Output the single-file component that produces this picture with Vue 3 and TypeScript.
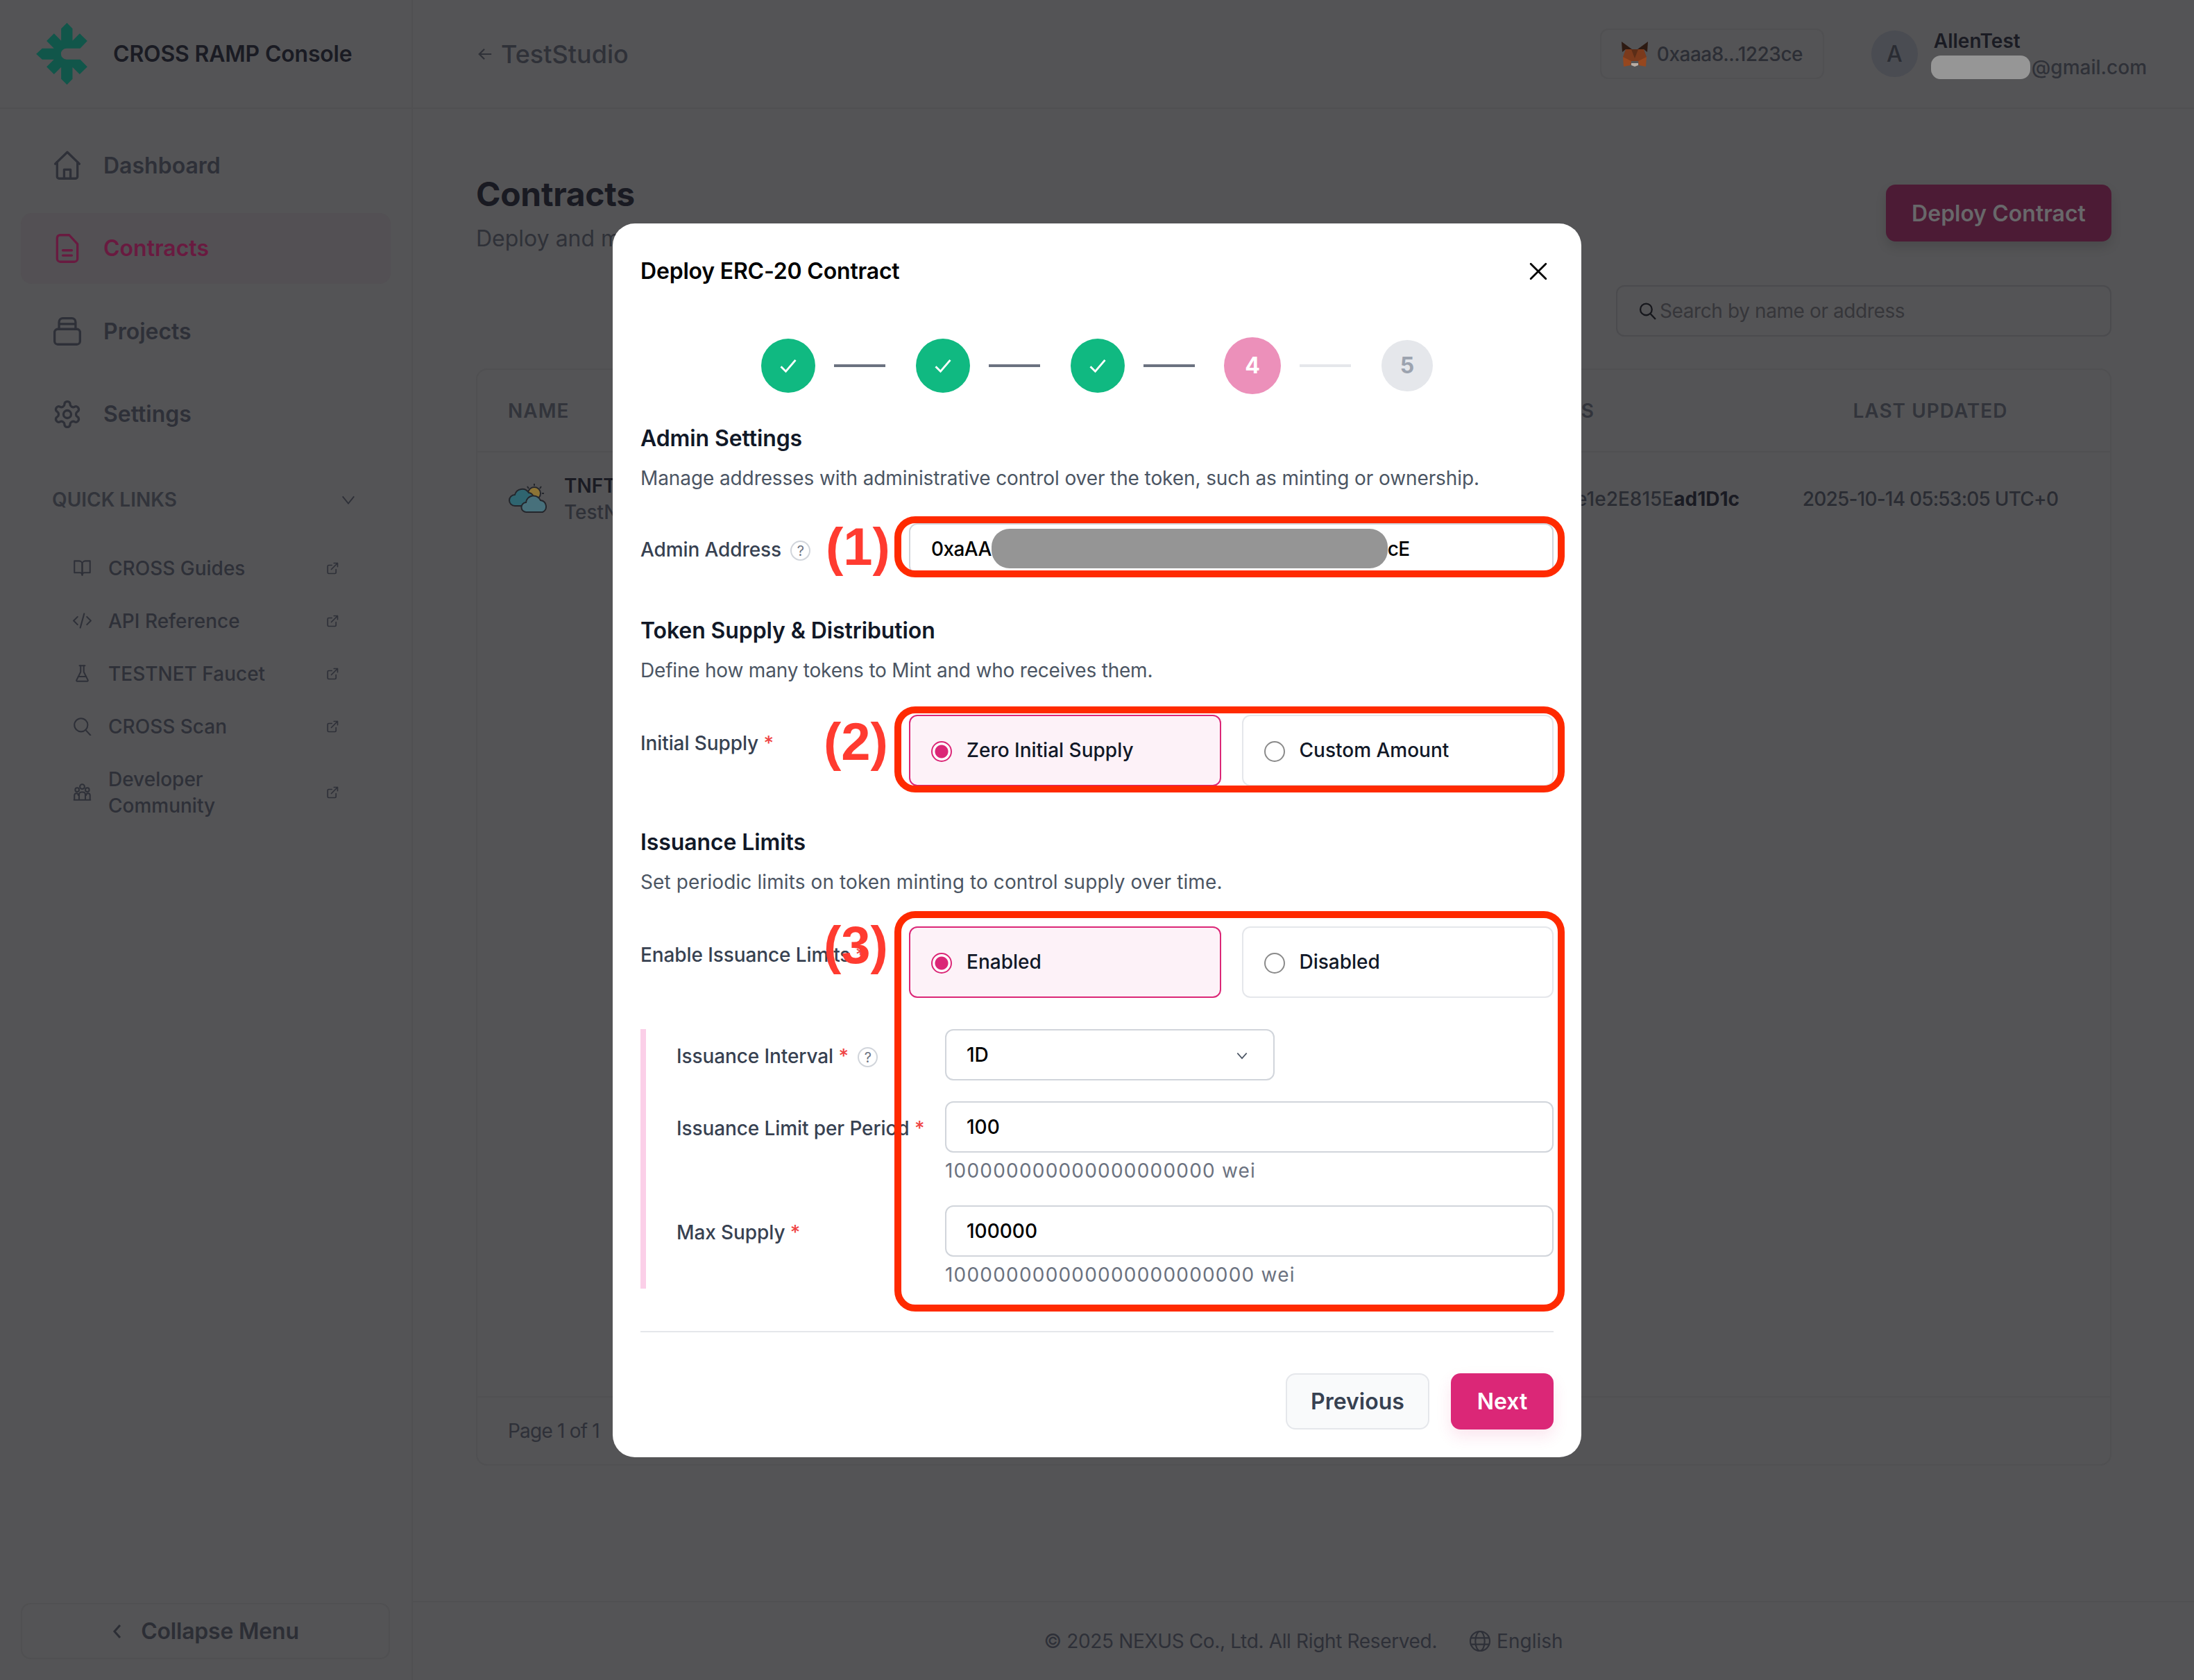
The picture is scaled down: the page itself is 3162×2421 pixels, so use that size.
<script setup lang="ts">
// deploy wizard, step 4 of 5, shown over the contracts page
const navItems = [
  { label: 'Dashboard', icon: 'home' },
  { label: 'Contracts', icon: 'doc', active: true },
  { label: 'Projects', icon: 'stack' },
  { label: 'Settings', icon: 'gear' },
]

const quickLinks = [
  { label: 'CROSS Guides', icon: 'book' },
  { label: 'API Reference', icon: 'code' },
  { label: 'TESTNET Faucet', icon: 'flask' },
  { label: 'CROSS Scan', icon: 'search' },
  { label: 'Developer Community', icon: 'people' },
]

const steps = [
  { n: 1, state: 'done' },
  { n: 2, state: 'done' },
  { n: 3, state: 'done' },
  { n: 4, state: 'current' },
  { n: 5, state: 'todo' },
]

const annotations = [
  { cls: 'box-1', num: '(1)', numCls: 'num-1' },
  { cls: 'box-2', num: '(2)', numCls: 'num-2' },
  { cls: 'box-3', num: '(3)', numCls: 'num-3' },
]
</script>

<template>
  <div class="page">
    <aside class="sidebar">
      <div class="brand">
        <svg class="logo" viewBox="157 100 221 267">
          <path d="M290 100 314 125V177L345 146 378 178 347 210H288A24 24 0 0 0 288 258H347L378 290 345 322 314 291V342L290 367 265 342V291L234 322 202 290 234 258H183L157 234 183 210H234L202 178 234 146 265 177V125Z" />
        </svg>
        <span class="brand-name">CROSS RAMP Console</span>
      </div>

      <nav class="nav">
        <a v-for="item in navItems" :key="item.label" class="nav-item" :class="{ active: item.active }">
          <svg class="nav-icon" viewBox="0 0 24 24">
            <template v-if="item.icon === 'home'">
              <path d="M2.5 11 12 1.8 21.5 11" />
              <path d="M4 9.5V21a1.5 1.5 0 0 0 1.5 1.5h13A1.5 1.5 0 0 0 20 21V9.5" />
              <path d="M9.5 22.5V15.5h5V22.5" />
            </template>
            <template v-else-if="item.icon === 'doc'">
              <path d="M6 1.5h7.5L20 8.5V20a2.5 2.5 0 0 1-2.5 2.5h-11A2.5 2.5 0 0 1 4 20V4a2.5 2.5 0 0 1 2-2.5Z" />
              <path d="M8.5 13.5h7M8.5 17.5h7" />
            </template>
            <template v-else-if="item.icon === 'stack'">
              <rect x="2" y="10.5" width="20" height="12" rx="2.5" />
              <path d="M5.5 10.5V5a3 3 0 0 1 3-3h7a3 3 0 0 1 3 3v5.5M5.5 6.5h13" />
            </template>
            <template v-else>
              <path d="M12.22 2h-.44a2 2 0 0 0-2 2v.18a2 2 0 0 1-1 1.73l-.43.25a2 2 0 0 1-2 0l-.15-.08a2 2 0 0 0-2.73.73l-.22.38a2 2 0 0 0 .73 2.73l.15.1a2 2 0 0 1 1 1.72v.51a2 2 0 0 1-1 1.74l-.15.09a2 2 0 0 0-.73 2.73l.22.38a2 2 0 0 0 2.73.73l.15-.08a2 2 0 0 1 2 0l.43.25a2 2 0 0 1 1 1.73V20a2 2 0 0 0 2 2h.44a2 2 0 0 0 2-2v-.18a2 2 0 0 1 1-1.73l.43-.25a2 2 0 0 1 2 0l.15.08a2 2 0 0 0 2.73-.73l.22-.39a2 2 0 0 0-.73-2.73l-.15-.08a2 2 0 0 1-1-1.74v-.5a2 2 0 0 1 1-1.74l.15-.09a2 2 0 0 0 .73-2.73l-.22-.38a2 2 0 0 0-2.73-.73l-.15.08a2 2 0 0 1-2 0l-.43-.25a2 2 0 0 1-1-1.73V4a2 2 0 0 0-2-2z" />
              <circle cx="12" cy="12" r="3" />
            </template>
          </svg>
          {{ item.label }}
        </a>
      </nav>

      <div class="quick-head">
        <span>QUICK LINKS</span>
        <svg class="quick-chevron" viewBox="0 0 24 24"><path d="M3 7l9 11 9-11" /></svg>
      </div>

      <ul class="quick-list">
        <li v-for="link in quickLinks" :key="link.label" class="quick-item">
          <svg class="quick-icon" viewBox="0 0 24 24">
            <template v-if="link.icon === 'book'">
              <path d="M2 3h6a4 4 0 0 1 4 4v14a3 3 0 0 0-3-3H2z" />
              <path d="M22 3h-6a4 4 0 0 0-4 4v14a3 3 0 0 1 3-3h7z" />
            </template>
            <template v-else-if="link.icon === 'code'">
              <path d="M6 7 1 12l5 5M18 7l5 5-5 5M14.5 3l-5 18" />
            </template>
            <template v-else-if="link.icon === 'flask'">
              <path d="M10 2v7.53a2 2 0 0 1-.21.9L4.72 20.55a1 1 0 0 0 .9 1.45h12.76a1 1 0 0 0 .9-1.45l-5.07-10.12a2 2 0 0 1-.21-.9V2" />
              <path d="M8.5 2h7M7 16h10" />
            </template>
            <template v-else-if="link.icon === 'search'">
              <circle cx="10.5" cy="10.5" r="8.5" />
              <path d="m16.5 17 6 6.5" />
            </template>
            <template v-else>
              <circle cx="12" cy="5" r="3" />
              <circle cx="5.5" cy="9" r="2.5" />
              <circle cx="18.5" cy="9" r="2.5" />
              <path d="M8 22v-7a3 3 0 0 1 3-3h2a3 3 0 0 1 3 3v7M2 22v-6a2.5 2.5 0 0 1 5 0M17 16a2.5 2.5 0 0 1 5 0v6M1.5 22h21" />
            </template>
          </svg>
          <span class="quick-label">{{ link.label }}</span>
          <svg class="ext-icon" viewBox="0 0 24 24">
            <path d="M19 14v6a2 2 0 0 1-2 2H5a2 2 0 0 1-2-2V8a2 2 0 0 1 2-2h6M15 2h7v7M10 14 22 2" />
          </svg>
        </li>
      </ul>

      <button class="collapse">
        <svg class="collapse-icon" viewBox="0 0 12 24"><path d="M10 3 2 12l8 9" /></svg>
        Collapse Menu
      </button>
    </aside>

    <div class="main">
      <header class="topbar">
        <div class="crumb">
          <svg class="crumb-arrow" viewBox="0 0 24 24"><path d="M22 12H3M11 4l-8 8 8 8" /></svg>
          TestStudio
        </div>
        <div class="wallet">
          <svg class="fox" viewBox="0 0 38 36">
            <path fill="#2d1a12" d="M0 0 15 11H6L1 15Z" />
            <path fill="#2d1a12" d="M38 0 23 11H32L37 15Z" />
            <path fill="#7b3a1c" d="M6 11H32L36 22 33 30 24 28H14L5 30 2 22Z" />
            <path fill="#96471f" d="M2 22 14 28 13 34 3 36Z" />
            <path fill="#96471f" d="M36 22 24 28 25 34 35 36Z" />
            <path fill="#5b2d17" d="M14 11 19 24 24 11Z" />
            <path fill="#b9ada4" d="M14 31H24V34L19 36 14 34Z" />
          </svg>
          0xaaa8...1223ce
        </div>
        <div class="account">
          <div class="avatar">A</div>
          <div class="account-text">
            <div class="account-name">AllenTest</div>
            <div class="account-mail"><span class="mail-mask"></span>@gmail.com</div>
          </div>
        </div>
      </header>

      <section class="content">
        <div class="title-row">
          <div>
            <h1 class="page-title">Contracts</h1>
            <p class="page-sub">Deploy and manage your contracts</p>
          </div>
          <button class="deploy-btn">Deploy Contract</button>
        </div>

        <div class="filters">
          <div class="search">
            <svg class="search-icon" viewBox="0 0 24 24"><circle cx="10" cy="10" r="8" /><path d="m16 16 7 7.5" /></svg>
            Search by name or address
          </div>
        </div>

        <div class="table-card">
          <div class="table-row table-head">
            <span>NAME</span>
            <span class="addr-head">ADDRESS</span>
            <span class="date-cell">LAST UPDATED</span>
          </div>
          <div class="table-row table-body">
            <div class="name-cell">
              <svg class="cloud" viewBox="0 0 58 44">
                <circle cx="38" cy="14" r="9" fill="#8c7436" stroke="#24262c" stroke-width="2" />
                <path d="M38 0v3M28 4l2 3M48 4l-2 3M52 14h-3" stroke="#24262c" stroke-width="2" fill="none" />
                <path d="M10 32a8 8 0 0 1 0-16 11 11 0 0 1 20-3 8 8 0 0 1 6 12v7Z" fill="#2f6570" stroke="#24262c" stroke-width="2" />
                <path d="M27 41a7 7 0 0 1-1-14 11 11 0 0 1 21-3 9 9 0 0 1 3 17Z" fill="#47707b" stroke="#24262c" stroke-width="2" />
              </svg>
              <div>
                <div class="name-main">TNFT</div>
                <div class="name-sub">TestNFT</div>
              </div>
            </div>
            <span class="addr-cell">e1e2E815E<b>ad1D1c</b></span>
            <span class="date-cell">2025-10-14 05:53:05 UTC+0</span>
          </div>
          <div class="table-foot">Page 1 of 1</div>
        </div>
      </section>

      <footer class="footer">
        <span class="copyright">© 2025 NEXUS Co., Ltd. All Right Reserved.</span>
        <span class="lang">
          <svg class="globe" viewBox="0 0 24 24">
            <circle cx="12" cy="12" r="10.5" />
            <ellipse cx="12" cy="12" rx="5" ry="10.5" />
            <path d="M2 8.5h20M2 15.5h20" />
          </svg>
          English
        </span>
      </footer>
    </div>

    <div class="scrim">
      <div class="modal">
        <div class="modal-head">
          <h2 class="modal-title">Deploy ERC-20 Contract</h2>
          <svg class="close" viewBox="0 0 24 24"><path d="M2 2l20 20M22 2 2 22" /></svg>
        </div>

        <div class="stepper">
          <template v-for="(step, i) in steps" :key="step.n">
            <span v-if="i > 0" class="step-line" :class="{ light: step.state === 'todo' }"></span>
            <span class="step" :class="step.state">
              <svg v-if="step.state === 'done'" class="check" viewBox="0 0 24 24"><path d="M3 13l6 6L21 5" /></svg>
              <template v-else>{{ step.n }}</template>
            </span>
          </template>
        </div>

        <h3 class="section-title first">Admin Settings</h3>
        <p class="section-desc">Manage addresses with administrative control over the token, such as minting or ownership.</p>
        <div class="form-row admin-row">
          <label class="form-label">Admin Address <span class="help">?</span></label>
          <div class="field address">
            0xaAA<span class="mask"></span>cE
          </div>
        </div>

        <h3 class="section-title">Token Supply &amp; Distribution</h3>
        <p class="section-desc tight">Define how many tokens to Mint and who receives them.</p>
        <div class="form-row radio-row">
          <label class="form-label">Initial Supply <span class="req">*</span></label>
          <div class="radio-grid">
            <div class="radio-card on"><span class="radio"></span>Zero Initial Supply</div>
            <div class="radio-card"><span class="radio"></span>Custom Amount</div>
          </div>
        </div>

        <h3 class="section-title">Issuance Limits</h3>
        <p class="section-desc wide">Set periodic limits on token minting to control supply over time.</p>
        <div class="form-row radio-row">
          <label class="form-label">Enable Issuance Limits <span class="req">*</span></label>
          <div class="radio-grid">
            <div class="radio-card on"><span class="radio"></span>Enabled</div>
            <div class="radio-card"><span class="radio"></span>Disabled</div>
          </div>
        </div>

        <div class="nested">
          <div class="nested-row">
            <label class="form-label">Issuance Interval <span class="req">*</span> <span class="help">?</span></label>
            <div class="field select">
              1D
              <svg class="select-chevron" viewBox="0 0 24 24"><path d="M4 8l8 9 8-9" /></svg>
            </div>
          </div>
          <div class="nested-row">
            <label class="form-label">Issuance Limit per Period <span class="req">*</span></label>
            <div>
              <input class="field" value="100" readonly />
              <div class="hint">100000000000000000000 wei</div>
            </div>
          </div>
          <div class="nested-row">
            <label class="form-label">Max Supply <span class="req">*</span></label>
            <div>
              <input class="field" value="100000" readonly />
              <div class="hint">100000000000000000000000 wei</div>
            </div>
          </div>
        </div>

        <div class="modal-actions">
          <button class="btn-prev">Previous</button>
          <button class="btn-next">Next</button>
        </div>

        <!-- review marks drawn on top of the screenshot -->
        <template v-for="mark in annotations" :key="mark.num">
          <div class="mark-box" :class="mark.cls"></div>
          <div class="mark-num" :class="mark.numCls">{{ mark.num }}</div>
        </template>
      </div>
    </div>
  </div>
</template>

<style>
html,
body {
  margin: 0;
  background: #545456;
}
</style>

<style scoped>
* {
  box-sizing: border-box;
}
.page {
  position: relative;
  display: grid;
  grid-template-columns: 595px 1fr;
  width: 3162px;
  height: 2421px;
  overflow: hidden;
  background: #545456;
  color: #1e1f27;
  font-family: Inter, "Noto Sans", sans-serif;
}

/* sidebar */
.sidebar {
  display: flex;
  flex-direction: column;
  border-right: 2px solid #505052;
}
.brand {
  display: flex;
  align-items: center;
  gap: 37px;
  height: 157px;
  padding-left: 52px;
  border-bottom: 2px solid #505052;
}
.logo {
  width: 74px;
  height: 89px;
  fill: #11564a;
}
.brand-name {
  font-size: 32px;
  font-weight: 600;
  letter-spacing: -0.2px;
  color: #1a1b23;
}
.nav {
  display: flex;
  flex-direction: column;
  gap: 17.5px;
  margin-top: 30px;
  padding: 0 30px;
}
.nav-item {
  display: flex;
  align-items: center;
  gap: 30px;
  height: 102px;
  padding-left: 45px;
  border-radius: 16px;
  font-size: 32px;
  font-weight: 600;
  color: #2e3038;
}
.nav-item.active {
  background: #535054;
  color: #691a40;
}
.nav-icon {
  width: 44px;
  height: 44px;
  fill: none;
  stroke: currentColor;
  stroke-width: 1.8;
  stroke-linecap: round;
  stroke-linejoin: round;
}
.quick-head {
  display: flex;
  align-items: center;
  justify-content: space-between;
  height: 88px;
  margin: 28px 37px 0 47px;
  padding: 0 43px 0 28px;
  font-size: 28px;
  font-weight: 600;
  color: #32343b;
}
.quick-chevron {
  width: 22px;
  height: 22px;
  fill: none;
  stroke: #2e3038;
  stroke-width: 2;
}
.quick-list {
  margin: 17px 0 0;
  padding: 0 0 0 105px;
  list-style: none;
}
.quick-item {
  display: flex;
  align-items: center;
  padding: 19px 0;
  font-size: 28px;
  font-weight: 500;
  line-height: 38px;
  color: #2e3038;
}
.quick-icon {
  flex: none;
  width: 27px;
  height: 27px;
  margin-right: 24px;
  fill: none;
  stroke: currentColor;
  stroke-width: 1.8;
  stroke-linejoin: round;
  stroke-linecap: round;
}
.quick-label {
  width: 314px;
  padding-right: 50px;
}
.ext-icon {
  flex: none;
  width: 18px;
  height: 18px;
  fill: none;
  stroke: currentColor;
  stroke-width: 2.2;
  stroke-linecap: round;
  stroke-linejoin: round;
}
.collapse {
  display: flex;
  align-items: center;
  justify-content: center;
  gap: 28px;
  height: 81px;
  margin: auto 31px 30px 30px;
  padding-left: 8px;
  border: 2px solid #505052;
  border-radius: 14px;
  background: #545456;
  font: 600 32px Inter, "Noto Sans", sans-serif;
  letter-spacing: -0.2px;
  color: #2c2e35;
}
.collapse-icon {
  width: 12px;
  height: 26px;
  fill: none;
  stroke: currentColor;
  stroke-width: 3;
}

/* main column */
.main {
  display: flex;
  flex-direction: column;
  min-width: 0;
}
.topbar {
  display: flex;
  align-items: center;
  height: 157px;
  padding: 0 68px 0 93px;
  border-bottom: 2px solid #505052;
}
.crumb {
  display: flex;
  align-items: center;
  gap: 12px;
  margin-right: auto;
  font-size: 36px;
  font-weight: 500;
  color: #2f3138;
}
.crumb-arrow {
  width: 22px;
  height: 22px;
  fill: none;
  stroke: currentColor;
  stroke-width: 2.4;
}
.wallet {
  display: flex;
  align-items: center;
  gap: 13px;
  height: 73px;
  width: 323px;
  padding-left: 29px;
  border: 2px solid #505052;
  border-radius: 12px;
  font-size: 28px;
  font-weight: 500;
  letter-spacing: -0.5px;
  color: #2c2e35;
}
.fox {
  width: 38px;
  height: 36px;
}
.account {
  display: flex;
  align-items: center;
  gap: 19px;
  margin-left: 68px;
}
.avatar {
  display: flex;
  align-items: center;
  justify-content: center;
  width: 67px;
  height: 67px;
  border-radius: 50%;
  background: #4a4c52;
  font-size: 32px;
  font-weight: 500;
  color: #2a2c33;
}
.account-name {
  margin-left: 4px;
  font-size: 28px;
  font-weight: 600;
  line-height: 38px;
  color: #1a1b23;
}
.account-mail {
  display: flex;
  align-items: center;
  height: 38px;
  font-size: 28px;
  font-weight: 500;
  color: #2f3138;
}
.mail-mask {
  width: 143px;
  height: 34px;
  margin-right: 2px;
  border-radius: 14px;
  background: #969696;
}
.content {
  display: flex;
  flex: 1;
  flex-direction: column;
  padding: 0 119px 0 91px;
}
.title-row {
  display: flex;
  align-items: flex-start;
  justify-content: space-between;
  padding-top: 93px;
}
.page-title {
  margin: 0;
  font-size: 48px;
  font-weight: 700;
  line-height: 60px;
  letter-spacing: -0.3px;
  color: #191a22;
}
.page-sub {
  margin: 12px 0 0;
  font-size: 32px;
  line-height: 44px;
  color: #2f3138;
}
.deploy-btn {
  width: 325px;
  height: 82px;
  margin-top: 16px;
  border: 0;
  border-radius: 14px;
  background: #4c1b35;
  box-shadow: 0 8px 16px rgba(0, 0, 0, 0.12);
  font: 600 32px Inter, "Noto Sans", sans-serif;
  color: #68686a;
}
.filters {
  display: flex;
  justify-content: flex-end;
  margin-top: 45px;
}
.search {
  display: flex;
  align-items: center;
  gap: 5px;
  width: 714px;
  height: 74px;
  padding-left: 31px;
  border: 2px solid #4b4b4e;
  border-radius: 12px;
  font-size: 28px;
  letter-spacing: -0.4px;
  color: #36363a;
}
.search-icon {
  width: 25px;
  height: 26px;
  fill: none;
  stroke: #16171c;
  stroke-width: 2.2;
}
.table-card {
  display: flex;
  flex-direction: column;
  height: 1581px;
  margin-top: 46px;
  border: 2px solid #505052;
  border-radius: 16px;
}
.table-row {
  display: grid;
  grid-template-columns: 1fr auto 370px;
  column-gap: 90px;
  align-items: center;
  padding: 0 74px 0 44px;
  font-size: 28px;
}
.table-head {
  height: 119px;
  border-bottom: 2px solid #505052;
  font-weight: 600;
  letter-spacing: 1px;
  color: #32343b;
}
.addr-head {
  margin-right: 209px;
}
.table-body {
  flex: 1;
  align-items: start;
  padding-top: 29px;
  font-weight: 500;
  line-height: 34px;
  color: #2a2c33;
}
.name-cell {
  display: flex;
  align-items: center;
  gap: 23px;
}
.cloud {
  width: 58px;
  height: 44px;
}
.name-main {
  font-weight: 600;
  line-height: 38px;
  color: #1a1b23;
}
.name-sub {
  line-height: 38px;
  color: #2f3138;
}
.addr-cell {
  margin-top: 21px;
  text-align: right;
}
.addr-cell b {
  font-weight: 700;
  color: #1a1b23;
}
.date-cell {
  justify-self: center;
  white-space: nowrap;
}
.table-body .date-cell {
  margin-top: 21px;
  letter-spacing: -0.8px;
}
.table-foot {
  display: flex;
  align-items: center;
  height: 98px;
  padding-left: 44px;
  border-top: 2px solid #505052;
  font-size: 28px;
  letter-spacing: -0.8px;
  color: #2e3038;
}
.footer {
  display: flex;
  align-items: center;
  justify-content: center;
  gap: 46px;
  height: 114px;
  border-top: 2px solid #505052;
  font-size: 28px;
  color: #2e3038;
}
.copyright {
  letter-spacing: -0.35px;
}
.lang {
  display: flex;
  align-items: center;
  gap: 8px;
}
.globe {
  width: 32px;
  height: 32px;
  fill: none;
  stroke: currentColor;
  stroke-width: 1.6;
}

/* overlay */
.scrim {
  position: absolute;
  inset: 0;
  display: flex;
  align-items: center;
  justify-content: center;
}
.modal {
  position: relative;
  width: 1396px;
  height: 1778px;
  padding: 49px 40px 40px;
  border-radius: 32px;
  background: #fff;
  color: #111827;
}
.modal-head {
  display: flex;
  align-items: center;
  justify-content: space-between;
  height: 40px;
}
.modal-title {
  margin: 0;
  font-size: 32px;
  font-weight: 600;
  line-height: 40px;
  letter-spacing: -0.2px;
  color: #000;
}
.close {
  width: 26px;
  height: 26px;
  margin-right: 9px;
  fill: none;
  stroke: #000;
  stroke-width: 2.6;
  stroke-linecap: round;
}
.stepper {
  display: flex;
  align-items: center;
  justify-content: center;
  height: 82px;
  margin-top: 75px;
}
.step {
  display: flex;
  flex: none;
  align-items: center;
  justify-content: center;
  border-radius: 50%;
  font-size: 32px;
  font-weight: 700;
}
.step.done {
  width: 78px;
  height: 78px;
  background: #10b981;
}
.step.current {
  width: 82px;
  height: 82px;
  margin-left: -2px;
  background: #ec90ba;
  color: #fff;
}
.step.todo {
  width: 74px;
  height: 74px;
  background: #e5e7eb;
  color: #9ca3af;
}
.check {
  width: 28px;
  height: 28px;
  fill: none;
  stroke: #fff;
  stroke-width: 2.5;
}
.step-line {
  flex: none;
  width: 74px;
  height: 4px;
  margin: 0 44px 0 27px;
  background: #6b7280;
}
.step-line.light {
  background: #e5e7eb;
}
.section-title {
  margin: 61px 0 0;
  font-size: 32px;
  font-weight: 600;
  line-height: 40px;
  letter-spacing: -0.1px;
  color: #111827;
}
.section-title.first {
  margin-top: 44px;
}
.section-desc {
  margin: 18px 0 0;
  font-size: 28px;
  line-height: 38px;
  letter-spacing: -0.1px;
  color: #4b5563;
}
.section-desc.tight {
  letter-spacing: -0.2px;
}
.section-desc.wide {
  letter-spacing: 0.1px;
}
.form-row {
  display: grid;
  grid-template-columns: 387px 1fr;
  margin-top: 45px;
}
.admin-row {
  margin-top: 46px;
}
.admin-row .form-label {
  padding-top: 19px;
}
.radio-row .form-label {
  padding-top: 22px;
}
.form-label {
  display: block;
  padding-top: 20px;
  font-size: 28px;
  font-weight: 500;
  line-height: 38px;
  letter-spacing: -0.1px;
  color: #374151;
  white-space: nowrap;
}
.req {
  color: #ef4444;
}
.help {
  display: inline-flex;
  align-items: center;
  justify-content: center;
  width: 29px;
  height: 29px;
  margin-left: 6px;
  border: 2px solid #d1d5db;
  border-radius: 50%;
  font-size: 20px;
  font-weight: 400;
  color: #6b7280;
  vertical-align: 1px;
}
.field {
  display: flex;
  align-items: center;
  width: 100%;
  height: 74px;
  padding: 0 29px;
  border: 2px solid #d1d5db;
  border-radius: 12px;
  background: #fff;
  font: 500 28px Inter, "Noto Sans", sans-serif;
  color: #000;
  outline: none;
}
.address {
  padding-left: 30px;
  letter-spacing: -0.6px;
}
.mask {
  flex: none;
  width: 571px;
  height: 57px;
  border-radius: 26px;
  background: #959595;
}
.select {
  position: relative;
  width: 475px;
}
.select-chevron {
  position: absolute;
  top: 26px;
  right: 35px;
  width: 20px;
  height: 20px;
  fill: none;
  stroke: #4b5563;
  stroke-width: 2;
}
.radio-grid {
  display: grid;
  grid-template-columns: 1fr 1fr;
  gap: 30px;
}
.radio-card {
  display: flex;
  align-items: center;
  gap: 21px;
  height: 103px;
  padding-left: 30px;
  border: 2px solid #e5e7eb;
  border-radius: 12px;
  font-size: 28px;
  font-weight: 500;
  color: #111827;
}
.radio-card.on {
  border-color: #db2777;
  background: #fdf2f8;
}
.radio {
  flex: none;
  width: 30px;
  height: 30px;
  margin-top: 4px;
  border: 2px solid #8a8a8a;
  border-radius: 50%;
  background: #fff;
}
.radio-card.on .radio {
  border-color: #db2777;
  background: radial-gradient(circle, #db2777 0 9px, #fff 10px);
}
.nested {
  display: flex;
  flex-direction: column;
  gap: 30px;
  margin-top: 45px;
  padding-left: 44px;
  border-left: 8px solid #fbcfe8;
}
.nested-row {
  display: grid;
  grid-template-columns: 387px 1fr;
}
.hint {
  margin: 7px 0 1px;
  font-size: 28px;
  line-height: 38px;
  letter-spacing: 1.2px;
  color: #6b7280;
}
.modal-actions {
  display: flex;
  justify-content: flex-end;
  gap: 31px;
  margin-top: 61px;
  padding-top: 59px;
  border-top: 2px solid #e5e7eb;
}
.btn-prev,
.btn-next {
  height: 81px;
  border-radius: 14px;
  font: 600 32px Inter, "Noto Sans", sans-serif;
}
.btn-prev {
  width: 207px;
  border: 2px solid #e5e7eb;
  background: #f9fafb;
  color: #374151;
}
.btn-next {
  width: 148px;
  border: 0;
  background: #db2777;
  box-shadow: 0 10px 22px rgba(219, 39, 119, 0.12);
  color: #fff;
}

/* red review marks */
.mark-box {
  position: absolute;
  left: 406px;
  width: 966px;
  border: 10px solid #ff2a00;
  border-radius: 30px;
}
.box-1 {
  top: 422px;
  height: 88px;
}
.box-2 {
  top: 696px;
  height: 124px;
}
.box-3 {
  top: 991px;
  height: 577px;
}
.mark-num {
  position: absolute;
  font-family: "Liberation Sans", Arial, sans-serif;
  font-size: 76px;
  font-weight: 700;
  line-height: 76px;
  color: #ff3b30;
}
.num-1 {
  left: 307px;
  top: 428px;
}
.num-2 {
  left: 304px;
  top: 709px;
}
.num-3 {
  left: 304px;
  top: 1002px;
}
</style>
